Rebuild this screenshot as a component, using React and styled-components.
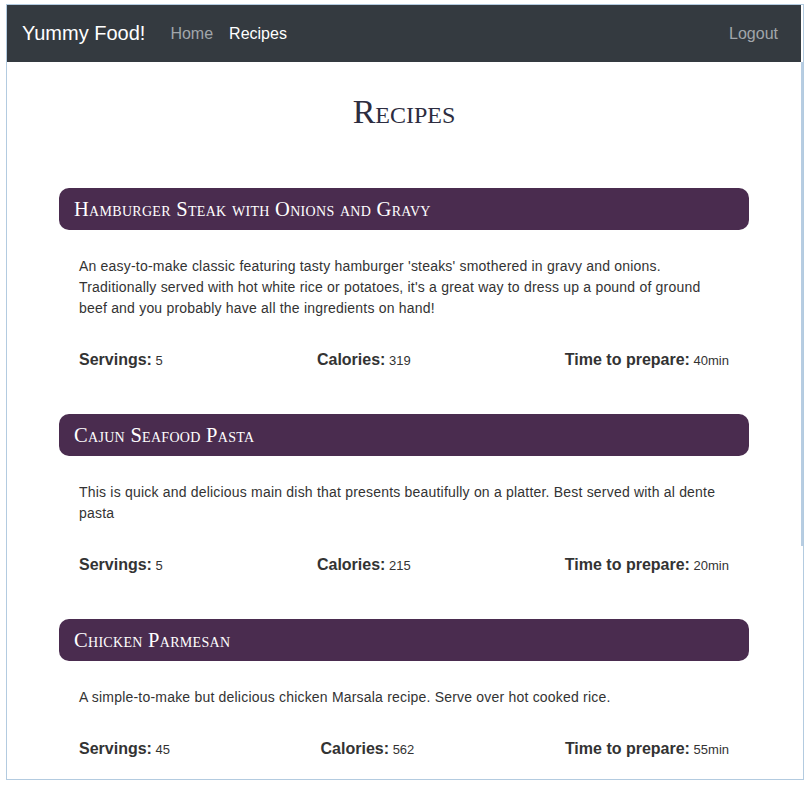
import React from 'react'
import styled, { createGlobalStyle } from 'styled-components'

const GlobalStyles = createGlobalStyle`
  body {
    margin: 0;
    background: #fff;
    font-family: "Liberation Sans", Arial, sans-serif;
  }
`

const recipes = [
  {
    title: 'Hamburger Steak with Onions and Gravy',
    description:
      "An easy-to-make classic featuring tasty hamburger 'steaks' smothered in gravy and onions. Traditionally served with hot white rice or potatoes, it's a great way to dress up a pound of ground beef and you probably have all the ingredients on hand!",
    servings: 5,
    calories: 319,
    time: 40,
  },
  {
    title: 'Cajun Seafood Pasta',
    description:
      'This is quick and delicious main dish that presents beautifully on a platter. Best served with al dente pasta',
    servings: 5,
    calories: 215,
    time: 20,
  },
  {
    title: 'Chicken Parmesan',
    description:
      'A simple-to-make but delicious chicken Marsala recipe. Serve over hot cooked rice.',
    servings: 45,
    calories: 562,
    time: 55,
  },
]

const Frame = styled.div`
  margin: 4px 0 0 6px;
  width: 798px;
  height: 776px;
  box-sizing: border-box;
  border: 1px solid #b3cbe0;
  display: flex;
  overflow: hidden;
`

const Main = styled.div`
  width: 794px;
  flex-shrink: 0;
  display: flex;
  flex-direction: column;
`

const ScrollTrack = styled.div`
  width: 2px;
  padding-top: 57px;
  background: #fff;
`

const ScrollThumb = styled.div`
  height: 484px;
  background: #b7cde2;
`

const Navbar = styled.nav`
  flex-shrink: 0;
  height: 57px;
  background: #343a40;
  display: flex;
  align-items: center;
  padding: 0 15px;
`

const Brand = styled.a`
  color: #fff;
  font-size: 20px;
  margin-right: 17px;
`

const NavLink = styled.a`
  color: ${({ active }) => (active ? '#fff' : '#a1a6ab')};
  font-size: 16px;
  padding: 0 8px;
  margin-left: ${({ push }) => (push ? 'auto' : '0')};
`

const Content = styled.main`
  padding: 0 52px;
`

const PageTitle = styled.h1`
  margin: 30px 0 56px;
  text-align: center;
  font-family: "Liberation Serif", "DejaVu Serif", serif;
  font-variant: small-caps;
  font-weight: normal;
  font-size: 34px;
  line-height: 40px;
  color: #2d2d40;
`

const Card = styled.section`
  margin-bottom: 41px;
`

const CardHeader = styled.h2`
  margin: 0;
  height: 42px;
  display: flex;
  align-items: center;
  padding: 0 15px;
  border-radius: 10px;
  background: #4a2c4f;
  color: #fff;
  font-family: "Liberation Serif", "DejaVu Serif", serif;
  font-variant: small-caps;
  font-weight: normal;
  font-size: 20.5px;
  letter-spacing: 0.3px;
`

const Description = styled.p`
  margin: 26px 0 0 20px;
  width: 643px;
  font-size: 14px;
  letter-spacing: 0.2px;
  line-height: 21px;
  color: #333;
`

const Stats = styled.div`
  margin: 29px 20px 0;
  display: flex;
  justify-content: space-between;
  line-height: 24px;
  color: #333;
`

const Stat = styled.div`
  font-size: 13px;
`

const Label = styled.b`
  font-size: 16px;
`

const App = () => (
  <>
    <GlobalStyles />
    <Frame>
      <Main>
        <Navbar>
          <Brand>Yummy Food!</Brand>
          <NavLink>Home</NavLink>
          <NavLink active>Recipes</NavLink>
          <NavLink push>Logout</NavLink>
        </Navbar>
        <Content>
          <PageTitle>Recipes</PageTitle>
          {recipes.map((r) => (
            <Card key={r.title}>
              <CardHeader>{r.title}</CardHeader>
              <Description>{r.description}</Description>
              <Stats>
                <Stat>
                  <Label>Servings:</Label> {r.servings}
                </Stat>
                <Stat>
                  <Label>Calories:</Label> {r.calories}
                </Stat>
                <Stat>
                  <Label>Time to prepare:</Label> {r.time}min
                </Stat>
              </Stats>
            </Card>
          ))}
        </Content>
      </Main>
      <ScrollTrack>
        <ScrollThumb />
      </ScrollTrack>
    </Frame>
  </>
)

export default App
